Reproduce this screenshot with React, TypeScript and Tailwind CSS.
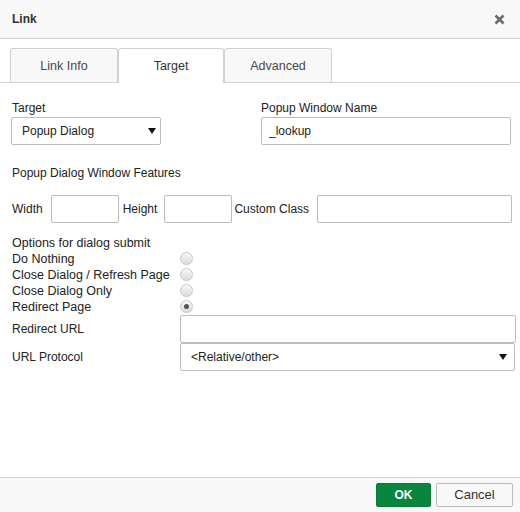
import React from 'react';

const font = { fontFamily: '"Liberation Sans", Arial, sans-serif' };

function Caret() {
  return (
    <svg width="8" height="6" viewBox="0 0 8 6" className="shrink-0">
      <polygon points="0,0 8,0 4,6" fill="#111" />
    </svg>
  );
}

function Radio({ checked }: { checked?: boolean }) {
  return (
    <span className="flex h-[13px] w-[13px] items-center justify-center rounded-full border border-[#c4c4c4] bg-gradient-to-b from-[#f7f7f7] to-[#dcdcdc]">
      {checked && <span className="h-[5px] w-[5px] rounded-full bg-[#555]" />}
    </span>
  );
}

export default function App() {
  const tabs = [
    { label: 'Link Info', w: 'w-[108px]' },
    { label: 'Target', w: 'w-[106px]' },
    { label: 'Advanced', w: 'w-[108px]' },
  ];
  const options = ['Do Nothing', 'Close Dialog / Refresh Page', 'Close Dialog Only', 'Redirect Page'];

  return (
    <div className="flex h-[512px] w-[520px] flex-col bg-white text-[12px] text-[#333]" style={font}>
      {/* header */}
      <div className="flex h-[39px] shrink-0 items-center justify-between border-b border-[#d1d1d1] bg-[#f8f8f8] pl-[12px] pr-[15px]">
        <span className="font-bold text-[#333]">Link</span>
        <svg width="11" height="11" viewBox="0 0 11 11">
          <path d="M1.5 1.5 L9.5 9.5 M9.5 1.5 L1.5 9.5" stroke="#6b6b6b" strokeWidth="2.6" />
        </svg>
      </div>

      {/* tabs */}
      <div className="flex h-[44px] shrink-0 items-end border-b border-[#d1d1d1] pl-[10px] text-[12.5px]">
        {tabs.map((t) => {
          const active = t.label === 'Target';
          return (
            <div
              key={t.label}
              className={
                active
                  ? `relative -mb-px flex h-[35px] ${t.w} items-center justify-center rounded-t-[3px] border border-b-0 border-[#d1d1d1] bg-white pt-px text-[#333]`
                  : `flex h-[34px] ${t.w} items-center justify-center rounded-t-[3px] border border-b-0 border-[#d1d1d1] bg-[#f8f8f8] pt-[2px] text-[#484848]`
              }
            >
              {t.label}
            </div>
          );
        })}
      </div>

      {/* body */}
      <div className="flex-1 pl-[11px] pt-[18px]">
        <div className="grid grid-cols-[250px_250px]">
          <div>
            <div className="h-[14px] pl-px leading-[14px] text-[#222]">Target</div>
            <div className="mt-[2px] flex h-[28px] w-[150px] items-center justify-between rounded-[2px] border border-[#bcbcbc] pl-[10px] pr-[4px] text-[#222]">
              <span>Popup Dialog</span>
              <Caret />
            </div>
          </div>
          <div>
            <div className="h-[14px] leading-[14px] text-[#222]">Popup Window Name</div>
            <div className="mt-[2px] flex h-[28px] w-[250px] items-center rounded-[2px] border border-[#bcbcbc] pl-[7px] text-[#222]">
              _lookup
            </div>
          </div>
        </div>

        <div className="mt-[21px] h-[14px] pl-px leading-[14px] text-[#222]">Popup Dialog Window Features</div>

        <div className="mt-[15px] flex items-center pl-px text-[#222]">
          <span>Width</span>
          <span className="ml-[8px] h-[28px] w-[68px] rounded-[2px] border border-[#bcbcbc]" />
          <span className="ml-[4px]">Height</span>
          <span className="ml-[7px] h-[28px] w-[68px] rounded-[2px] border border-[#bcbcbc]" />
          <span className="ml-[2px]">Custom Class</span>
          <span className="ml-[8px] h-[28px] w-[195px] rounded-[2px] border border-[#bcbcbc]" />
        </div>

        <div className="mt-[12px] grid grid-cols-[168px_1fr] pl-px leading-[16px] text-[#222]">
          <div className="col-span-2 text-[12.5px]">Options for dialog submit</div>
          {options.map((o, i) => (
            <React.Fragment key={o}>
              <div className="whitespace-nowrap text-[12.5px]">{o}</div>
              <div className="flex h-[16px] items-start pt-px">
                <Radio checked={i === 3} />
              </div>
            </React.Fragment>
          ))}
          <div className="flex h-[28px] items-center">Redirect URL</div>
          <div className="h-[28px] w-[336px] rounded-[2px] border border-[#bcbcbc]" />
          <div className="flex h-[28px] items-center">URL Protocol</div>
          <div className="flex h-[28px] w-[335px] items-center justify-between rounded-[2px] border border-[#bcbcbc] pl-[10px] pr-[7px]">
            <span>&lt;Relative/other&gt;</span>
            <Caret />
          </div>
        </div>
      </div>

      {/* footer */}
      <div className="flex h-[35px] shrink-0 items-center justify-end gap-[5px] border-t border-[#d1d1d1] bg-[#f8f8f8] pr-[7px]">
        <button className="flex h-[24px] w-[55px] items-center justify-center rounded-[2px] border border-[#097a38] bg-[#09863e] font-bold text-white">
          OK
        </button>
        <button className="flex h-[24px] w-[77px] items-center justify-center rounded-[2px] border border-[#bcbcbc] bg-[#f8f8f8] text-[13px] text-[#333]">
          Cancel
        </button>
      </div>
    </div>
  );
}
